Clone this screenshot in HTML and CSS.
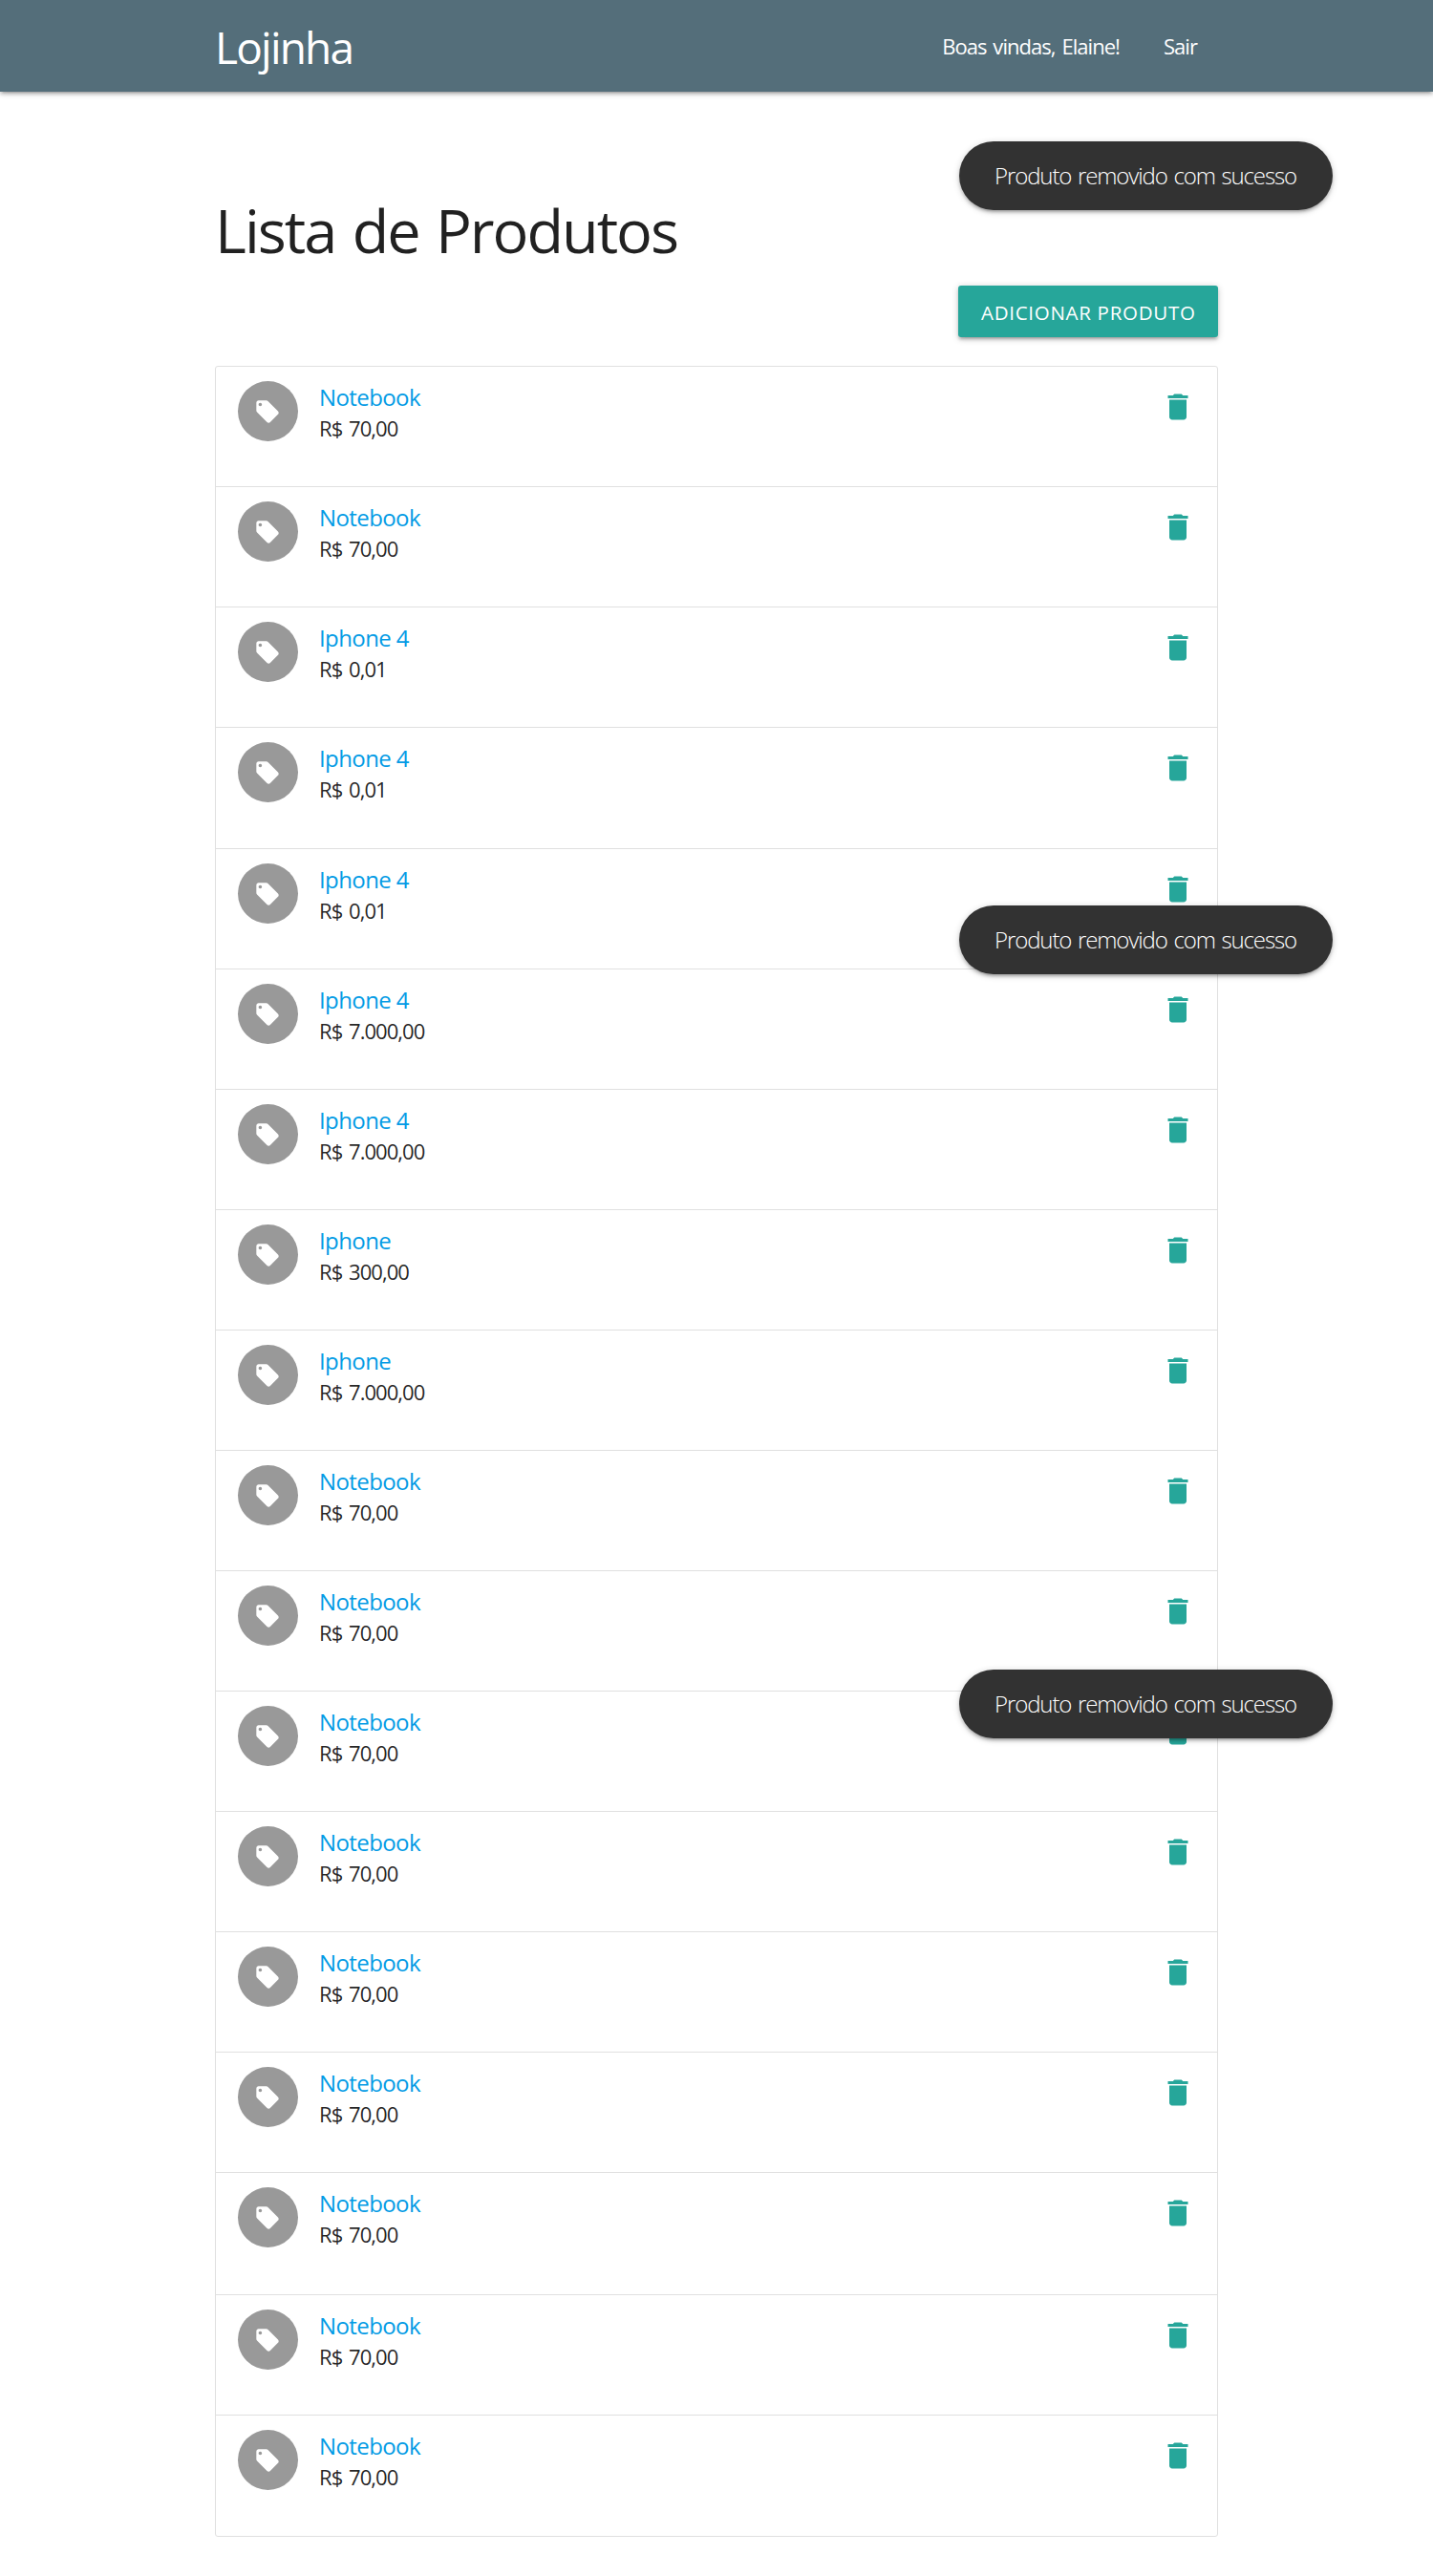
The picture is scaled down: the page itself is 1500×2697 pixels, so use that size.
FILE: index.html
```html
<!DOCTYPE html>
<html lang="pt-BR">
<head>
<meta charset="utf-8">
<title>Lojinha</title>
<link rel="stylesheet" href="styles.css">
</head>
<body>
<svg class="sprite" aria-hidden="true">
  <symbol id="tag" viewBox="0 0 24 24"><path d="M21.41 11.58l-9-9C12.05 2.22 11.55 2 11 2H4c-1.1 0-2 .9-2 2v7c0 .55.22 1.05.59 1.42l9 9c.36.36.86.58 1.41.58.55 0 1.05-.22 1.41-.59l7-7c.37-.36.59-.86.59-1.41 0-.55-.23-1.06-.59-1.42zM5.5 7C4.67 7 4 6.33 4 5.5S4.67 4 5.5 4 7 4.67 7 5.5 6.33 7 5.5 7z"/></symbol>
  <symbol id="trash" viewBox="0 0 24 24"><path d="M6 19c0 1.1.9 2 2 2h8c1.1 0 2-.9 2-2V7H6v12zM19 4h-3.5l-1-1h-5l-1 1H5v2h14V4z"/></symbol>
</svg>
<header class="navbar">
  <div class="container navbar-inner">
    <a class="brand">Lojinha</a>
    <nav class="menu"><a class="greeting">Boas vindas, Elaine!</a><a class="logout">Sair</a></nav>
  </div>
</header>
<main class="container">
  <h1 class="title">Lista de Produtos</h1>
  <div class="actions"><a class="btn">Adicionar produto</a></div>
  <ul class="collection">
    <li class="item"><span class="circle"><svg class="tag"><use href="#tag"/></svg></span><div class="info"><a class="name">Notebook</a><p class="price">R$ 70,00</p></div><svg class="trash"><use href="#trash"/></svg></li>
    <li class="item"><span class="circle"><svg class="tag"><use href="#tag"/></svg></span><div class="info"><a class="name">Notebook</a><p class="price">R$ 70,00</p></div><svg class="trash"><use href="#trash"/></svg></li>
    <li class="item"><span class="circle"><svg class="tag"><use href="#tag"/></svg></span><div class="info"><a class="name">Iphone 4</a><p class="price">R$ 0,01</p></div><svg class="trash"><use href="#trash"/></svg></li>
    <li class="item item-tall"><span class="circle"><svg class="tag"><use href="#tag"/></svg></span><div class="info"><a class="name">Iphone 4</a><p class="price">R$ 0,01</p></div><svg class="trash"><use href="#trash"/></svg></li>
    <li class="item"><span class="circle"><svg class="tag"><use href="#tag"/></svg></span><div class="info"><a class="name">Iphone 4</a><p class="price">R$ 0,01</p></div><svg class="trash"><use href="#trash"/></svg></li>
    <li class="item"><span class="circle"><svg class="tag"><use href="#tag"/></svg></span><div class="info"><a class="name">Iphone 4</a><p class="price">R$ 7.000,00</p></div><svg class="trash"><use href="#trash"/></svg></li>
    <li class="item"><span class="circle"><svg class="tag"><use href="#tag"/></svg></span><div class="info"><a class="name">Iphone 4</a><p class="price">R$ 7.000,00</p></div><svg class="trash"><use href="#trash"/></svg></li>
    <li class="item"><span class="circle"><svg class="tag"><use href="#tag"/></svg></span><div class="info"><a class="name">Iphone</a><p class="price">R$ 300,00</p></div><svg class="trash"><use href="#trash"/></svg></li>
    <li class="item"><span class="circle"><svg class="tag"><use href="#tag"/></svg></span><div class="info"><a class="name">Iphone</a><p class="price">R$ 7.000,00</p></div><svg class="trash"><use href="#trash"/></svg></li>
    <li class="item"><span class="circle"><svg class="tag"><use href="#tag"/></svg></span><div class="info"><a class="name">Notebook</a><p class="price">R$ 70,00</p></div><svg class="trash"><use href="#trash"/></svg></li>
    <li class="item"><span class="circle"><svg class="tag"><use href="#tag"/></svg></span><div class="info"><a class="name">Notebook</a><p class="price">R$ 70,00</p></div><svg class="trash"><use href="#trash"/></svg></li>
    <li class="item"><span class="circle"><svg class="tag"><use href="#tag"/></svg></span><div class="info"><a class="name">Notebook</a><p class="price">R$ 70,00</p></div><svg class="trash"><use href="#trash"/></svg></li>
    <li class="item"><span class="circle"><svg class="tag"><use href="#tag"/></svg></span><div class="info"><a class="name">Notebook</a><p class="price">R$ 70,00</p></div><svg class="trash"><use href="#trash"/></svg></li>
    <li class="item"><span class="circle"><svg class="tag"><use href="#tag"/></svg></span><div class="info"><a class="name">Notebook</a><p class="price">R$ 70,00</p></div><svg class="trash"><use href="#trash"/></svg></li>
    <li class="item"><span class="circle"><svg class="tag"><use href="#tag"/></svg></span><div class="info"><a class="name">Notebook</a><p class="price">R$ 70,00</p></div><svg class="trash"><use href="#trash"/></svg></li>
    <li class="item item-taller"><span class="circle"><svg class="tag"><use href="#tag"/></svg></span><div class="info"><a class="name">Notebook</a><p class="price">R$ 70,00</p></div><svg class="trash"><use href="#trash"/></svg></li>
    <li class="item"><span class="circle"><svg class="tag"><use href="#tag"/></svg></span><div class="info"><a class="name">Notebook</a><p class="price">R$ 70,00</p></div><svg class="trash"><use href="#trash"/></svg></li>
    <li class="item"><span class="circle"><svg class="tag"><use href="#tag"/></svg></span><div class="info"><a class="name">Notebook</a><p class="price">R$ 70,00</p></div><svg class="trash"><use href="#trash"/></svg></li>
  </ul>
</main>
<div class="toast toast-top">Produto removido com sucesso</div>
<div class="toast toast-middle">Produto removido com sucesso</div>
<div class="toast toast-bottom">Produto removido com sucesso</div>
</body>
</html>
```
FILE: styles.css
```css
* { box-sizing: border-box; }

body {
  position: relative;
  margin: 0;
  min-height: 2697px;
  background: #fff;
  color: rgba(0, 0, 0, .87);
  font-family: "Open Sans", "Noto Sans", sans-serif;
  font-size: 22px;
}

.sprite { display: none; }

.container {
  width: 1050px;
  margin: 0 auto;
}

.navbar,
.btn,
.toast {
  box-shadow: 0 3px 3px rgba(0, 0, 0, .14), 0 4.5px 1.5px -3px rgba(0, 0, 0, .12), 0 1.5px 7.5px rgba(0, 0, 0, .2);
}

.navbar {
  height: 96px;
  background: #546e7a;
  color: #fff;
}

.navbar-inner {
  display: flex;
  justify-content: space-between;
}

.brand {
  font-size: 46px;
  line-height: 98px;
  letter-spacing: -1.8px;
}

.menu {
  display: flex;
  gap: 46px;
  padding-right: 22px;
  line-height: 97px;
  letter-spacing: -.95px;
  word-spacing: 2px;
}

.title {
  margin: 102px 0 0;
  height: 101px;
  font-size: 63px;
  font-weight: 400;
  line-height: 86px;
  letter-spacing: -2px;
  word-spacing: 3px;
}

.actions {
  display: flex;
  justify-content: flex-end;
}

.btn {
  width: 272px;
  height: 54px;
  padding-left: 24px;
  border-radius: 3px;
  background: #26a69a;
  color: #fff;
  font-size: 20.5px;
  line-height: 56px;
  letter-spacing: .71px;
  text-transform: uppercase;
  white-space: nowrap;
}

.collection {
  margin: 30px 0 0;
  padding: 0;
  border: 1px solid #e0e0e0;
  border-radius: 3px;
  list-style: none;
}

.item {
  display: flex;
  height: 126px;
  padding: 15px 23.5px 0 23px;
  border-bottom: 1px solid #e0e0e0;
}

.item:last-child { border-bottom: 0; }
.item-tall { height: 127px; }
.item-taller { height: 128px; }

.circle {
  display: flex;
  align-items: center;
  justify-content: center;
  width: 63px;
  height: 63px;
  margin-right: 22px;
  padding-right: 1px;
  border-radius: 50%;
  background: #999;
}

.tag {
  width: 28px;
  height: 28px;
  fill: #fff;
}

.info { flex: 1; }

.name {
  display: block;
  color: #039be5;
  font-size: 24px;
  line-height: 33px;
  letter-spacing: -.6px;
}

.price {
  margin: 0;
  line-height: 32px;
  letter-spacing: -.95px;
  word-spacing: 2px;
}

.trash {
  width: 36px;
  height: 36px;
  margin-top: 9px;
  fill: #26a69a;
}

.toast {
  position: absolute;
  left: 1004px;
  width: 391px;
  height: 72px;
  padding-left: 37px;
  border-radius: 36px;
  background: #323232;
  color: #fff;
  font-size: 24px;
  font-weight: 300;
  line-height: 72px;
  letter-spacing: -1.1px;
  word-spacing: 1.5px;
  white-space: nowrap;
}

.toast-top { top: 148px; }
.toast-middle { top: 948px; }
.toast-bottom { top: 1748px; }
```
